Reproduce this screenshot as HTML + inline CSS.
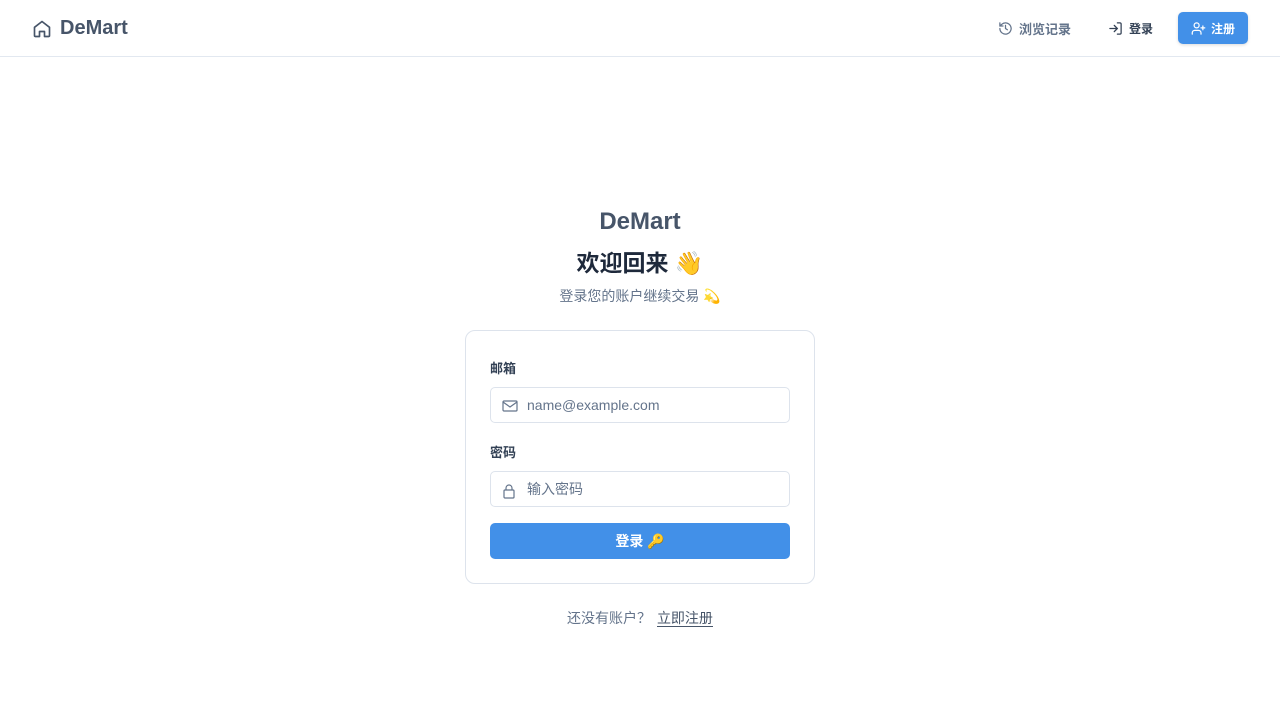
<!DOCTYPE html>
<html><head><meta charset="utf-8"><style>
*{box-sizing:border-box;margin:0;padding:0}
body{width:1280px;height:720px;background:#fff;font-family:"Liberation Sans","Noto Sans CJK SC",sans-serif;color:#475569;position:relative;overflow:hidden}
.hdr{position:absolute;top:0;left:0;width:1280px;height:57px;border-bottom:1px solid #e2e8f0}
.logo{position:absolute;left:32px;top:17px;display:flex;align-items:center;gap:8px;font-weight:700;font-size:20px;color:#475569}
.nav{position:absolute;top:12px;height:32px;display:flex;align-items:center;gap:6px;font-size:13px;font-weight:700;color:#64748b}
.btn{position:absolute;left:1178px;top:12px;width:70px;height:32px;background:#4290e8;border-radius:5px;color:#fff;font-size:12px;font-weight:700;display:flex;align-items:center;justify-content:center;gap:5px;box-shadow:0 1px 3px rgba(0,0,0,.15)}
.c{position:absolute;left:0;width:1280px;text-align:center}
.card{position:absolute;left:465px;top:330px;width:350px;height:254px;border:1px solid #dde3ec;border-radius:10px}
.lbl{position:absolute;left:24px;font-size:13px;font-weight:700;color:#334155}
.inp{position:absolute;left:24px;width:300px;height:36px;border:1px solid #dde3ec;border-radius:5px;font-size:14px;color:#64748b;padding-left:36px;line-height:34px}
.inp svg{position:absolute;left:11px;top:11px}
.sub{position:absolute;left:24px;top:192px;width:300px;height:36px;background:#4290e8;border-radius:5px;color:#fff;font-size:14px;font-weight:700;text-align:center;line-height:36px}
</style></head><body>
<div class="hdr">
<div class="logo"><svg width="20" height="20" viewBox="0 0 24 24" fill="none" stroke="#475569" stroke-width="2" stroke-linecap="round" stroke-linejoin="round"><path d="M3 10l9-7 9 7v10a1 1 0 0 1-1 1h-5v-6h-6v6H4a1 1 0 0 1-1-1z"/></svg>DeMart</div>
<div class="nav" style="left:998px"><svg width="15" height="15" viewBox="0 0 24 24" fill="none" stroke="#64748b" stroke-width="2" stroke-linecap="round"><path d="M3 12a9 9 0 1 0 3-6.7L3 8M3 3v5h5M12 7v5l3 2"/></svg>浏览记录</div>
<div class="nav" style="left:1108px;color:#334155;font-size:12px"><svg width="15" height="15" viewBox="0 0 24 24" fill="none" stroke="#334155" stroke-width="2" stroke-linecap="round"><path d="M15 3h4a2 2 0 0 1 2 2v14a2 2 0 0 1-2 2h-4M10 17l5-5-5-5M15 12H3"/></svg>登录</div>
<div class="btn"><svg width="15" height="15" viewBox="0 0 24 24" fill="none" stroke="#fff" stroke-width="2" stroke-linecap="round"><circle cx="9" cy="7" r="4"/><path d="M2 21v-2a4 4 0 0 1 4-4h6a4 4 0 0 1 4 4v2M19 8v6M16 11h6"/></svg>注册</div>
</div>
<div class="c" style="top:208px;font-size:24px;font-weight:700;color:#475569">DeMart</div>
<div class="c" style="top:244px;font-size:23px;font-weight:700;color:#1e293b">欢迎回来 👋</div>
<div class="c" style="top:286px;font-size:14px;color:#64748b">登录您的账户继续交易 💫</div>
<div class="card">
<div class="lbl" style="top:27px">邮箱</div>
<div class="inp" style="top:56px"><svg width="16" height="14" viewBox="0 0 16 14" fill="none" stroke="#64748b" stroke-width="1.2"><rect x="1" y="2" width="14" height="10" rx="1"/><path d="M1 3l7 5 7-5"/></svg>name@example.com</div>
<div class="lbl" style="top:111px">密码</div>
<div class="inp" style="top:140px"><svg width="14" height="16" viewBox="0 0 14 16" fill="none" stroke="#64748b" stroke-width="1.2"><rect x="2" y="7" width="10" height="8" rx="1"/><path d="M4 7V5a3 3 0 0 1 6 0v2"/></svg>输入密码</div>
<div class="sub">登录 🔑</div>
</div>
<div class="c" style="top:608px;font-size:14px;color:#64748b">还没有账户？ <span style="color:#475569;border-bottom:1px solid #475569;margin-left:2px">立即注册</span></div>
</body></html>
